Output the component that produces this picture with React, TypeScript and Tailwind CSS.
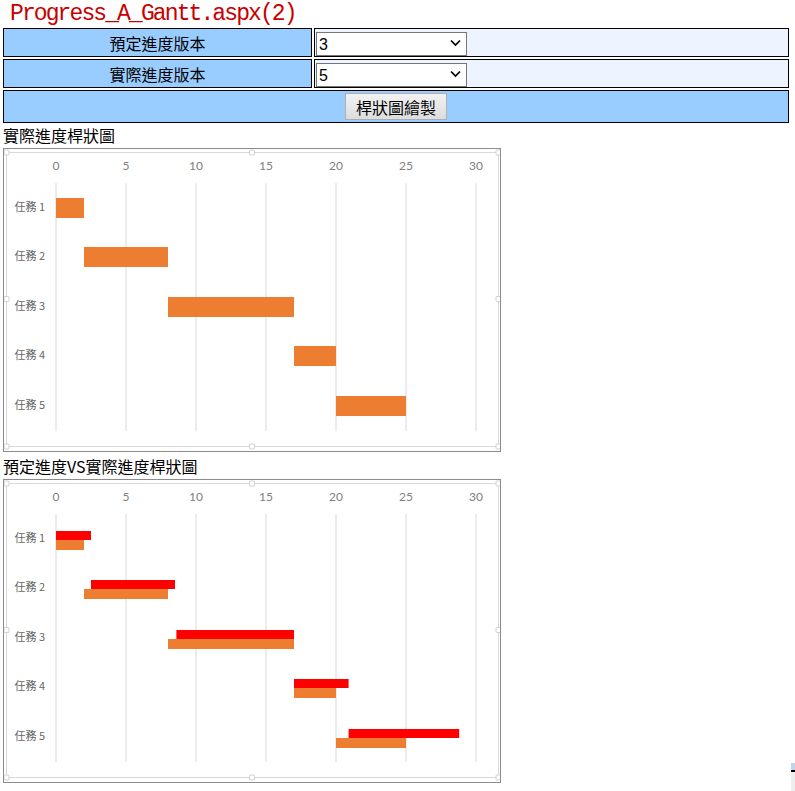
import React from 'react';

type Span = { from: number; to: number };

const actual: Span[] = [
  { from: 0, to: 2 },
  { from: 2, to: 8 },
  { from: 8, to: 17 },
  { from: 17, to: 20 },
  { from: 20, to: 25 },
];

const planned: Span[] = [
  { from: 0, to: 2.5 },
  { from: 2.5, to: 8.5 },
  { from: 8.6, to: 17 },
  { from: 17, to: 20.9 },
  { from: 20.9, to: 28.8 },
];

const ticks = [0, 5, 10, 15, 20, 25, 30];
const rowY = [59, 108, 158, 207, 257];
const xOf = (v: number) => 52 + v * 14;

const cjk = "'Noto Sans CJK TC', 'Liberation Sans', sans-serif";

const GanttChart: React.FC<{ plan?: Span[] }> = ({ plan }) => {
  const handles = [
    [2.5, 3.5], [248, 3.5], [494.5, 3.5],
    [2.5, 150], [494.5, 150],
    [2.5, 297.5], [248, 297.5], [494.5, 297.5],
  ];
  return (
    <div className="w-[498px] h-[304px] border border-[#8c8c8c] bg-white">
      <svg width="496" height="302" viewBox="0 0 496 302" style={{ fontFamily: cjk }}>
        <rect x="2.5" y="3.5" width="492" height="294" rx="3" fill="white" stroke="#d9d9d9" />
        {handles.map(([x, y], i) => (
          <rect key={i} x={x - 2.5} y={y - 2.5} width="5" height="5" rx="1" fill="white" stroke="#d0d0d0" />
        ))}
        {ticks.map((t) => (
          <g key={t}>
            <line x1={xOf(t)} x2={xOf(t)} y1="34" y2="282" stroke="#d9d9d9" strokeWidth="1" />
            <text x={xOf(t)} y="18" fontSize="12" fill="#808080" textAnchor="middle" dominantBaseline="middle" fontFamily="Lato, 'Open Sans', sans-serif">
              {t}
            </text>
          </g>
        ))}
        {rowY.map((c, i) => (
          <text key={i} x="41" y={c} fontSize="11" fill="#666666" textAnchor="end" dominantBaseline="middle">
            任務 {i + 1}
          </text>
        ))}
        {actual.map((s, i) =>
          plan ? (
            <g key={i}>
              <rect x={xOf(plan[i].from)} y={rowY[i] - 8} width={(plan[i].to - plan[i].from) * 14} height="9" fill="#ff0000" />
              <rect x={xOf(s.from)} y={rowY[i] + 1} width={(s.to - s.from) * 14} height="10" fill="#ed7d31" />
            </g>
          ) : (
            <rect key={i} x={xOf(s.from)} y={rowY[i] - 10} width={(s.to - s.from) * 14} height="20" fill="#ed7d31" />
          )
        )}
      </svg>
    </div>
  );
};

const VersionSelect: React.FC<{ value: string }> = ({ value }) => (
  <div className="relative ml-[1px] w-[151px] h-[24px]">
    <select
      defaultValue={value}
      className="appearance-none w-full h-full border border-[#767676] bg-white pl-[2px] text-[16px] text-black outline-none"
      style={{ fontFamily: "'Liberation Sans', sans-serif" }}
    >
      {['1', '2', '3', '4', '5'].map((v) => (
        <option key={v} value={v}>{v}</option>
      ))}
    </select>
    <svg className="absolute right-[6px] top-[8px] pointer-events-none" width="11" height="8" viewBox="0 0 11 8">
      <path d="M1 1.5 L5.5 6 L10 1.5" fill="none" stroke="#000" strokeWidth="1.7" />
    </svg>
  </div>
);

export default function App() {
  return (
    <div className="relative w-[795px] h-[791px] bg-white text-black overflow-hidden" style={{ fontFamily: cjk }}>
      <div
        className="h-[28px] pl-[10px] text-[23px] leading-[28px] tracking-[-1.9px] text-[#c80000]"
        style={{ fontFamily: "'Liberation Mono', monospace" }}
      >
        Progress_A_Gantt.aspx(2)
      </div>

      <div className="ml-[3px] w-[786px] flex flex-col gap-[2px]">
        <div className="flex gap-[2px] h-[29px]">
          <div className="w-[309px] border border-black bg-[#99ccff] flex items-center justify-center text-[16px]">預定進度版本</div>
          <div className="flex-1 border border-black bg-[#eef4ff] flex items-center">
            <VersionSelect value="3" />
          </div>
        </div>
        <div className="flex gap-[2px] h-[29px]">
          <div className="w-[309px] border border-black bg-[#99ccff] flex items-center justify-center text-[16px]">實際進度版本</div>
          <div className="flex-1 border border-black bg-[#eef4ff] flex items-center">
            <VersionSelect value="5" />
          </div>
        </div>
        <div className="h-[33px] border border-black bg-[#99ccff] flex items-center justify-center">
          <button className="w-[102px] h-[27px] border border-[#adadad] bg-gradient-to-b from-[#f2f2f2] to-[#dddddd] text-[16px] text-black leading-none">
            桿狀圖繪製
          </button>
        </div>
      </div>

      <div className="ml-[3px] h-[25px] text-[16px] leading-[25px]">實際進度桿狀圖</div>
      <div className="ml-[3px]">
        <GanttChart />
      </div>

      <div className="ml-[3px] mt-[2px] h-[25px] text-[16px] leading-[25px]">預定進度VS實際進度桿狀圖</div>
      <div className="ml-[3px]">
        <GanttChart plan={planned} />
      </div>

      <div className="absolute right-0 top-[763px] w-[4px] h-[28px] flex flex-col">
        <div className="h-[7px] bg-[#b9d6f2]" />
        <div className="h-[2px] bg-black" />
        <div className="flex-1 bg-[#eeeeee]" />
      </div>
    </div>
  );
}
